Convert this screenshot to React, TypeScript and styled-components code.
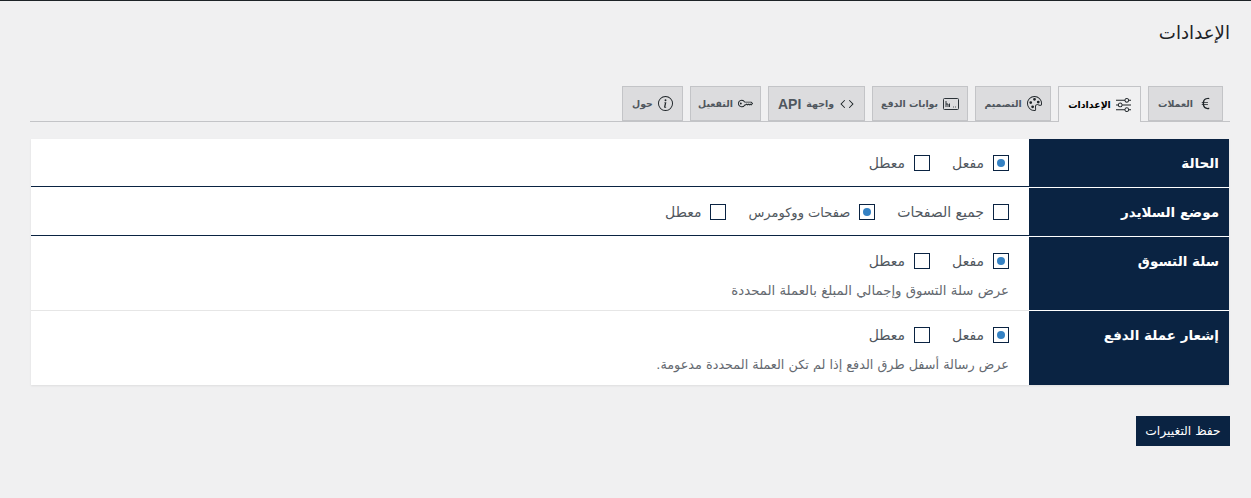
import React from 'react';
import styled, { createGlobalStyle } from 'styled-components';
import { BsCurrencyEuro, BsSliders, BsPalette, BsCode, BsKey, BsInfoCircle } from 'react-icons/bs';

const navy = '#0a2342';

const GlobalStyle = createGlobalStyle`
  html, body {
    margin: 0;
    padding: 0;
    background: #f0f0f1;
    font-family: "DejaVu Sans", "Noto Sans", sans-serif;
  }
`;

const Page = styled.div`
  direction: rtl;
  height: 497px;
  border-top: 1px solid #1d2327;
  padding: 0 21px 0 21px;
  overflow: hidden;
`;

const Title = styled.h1`
  margin: 0;
  padding: 19px 0 0;
  height: 85px;
  box-sizing: border-box;
  font-size: 18.2px;
  line-height: 26px;
  font-weight: 400;
  color: #1d2327;
`;

const TabBar = styled.div`
  display: flex;
  gap: 7px;
  height: 36px;
  box-sizing: border-box;
  margin-left: 9px;
  padding-right: 7px;
  border-bottom: 1px solid #c3c4c7;
`;

const Tab = styled.div<{ $active?: boolean; $width: number }>`
  display: flex;
  align-items: center;
  justify-content: center;
  gap: 5px;
  width: ${(p) => p.$width}px;
  height: ${(p) => (p.$active ? 36 : 35)}px;
  box-sizing: border-box;
  border: 1px solid #c3c4c7;
  border-bottom: ${(p) => (p.$active ? 'none' : '1px solid #c3c4c7')};
  background: ${(p) => (p.$active ? '#f0f0f1' : '#dcdcde')};
  color: ${(p) => (p.$active ? '#000' : '#50575e')};
  font-size: 9.4px;
  font-weight: 700;
  white-space: nowrap;

  svg {
    flex: none;
    color: #1d2327;
  }
`;

const ApiLatin = styled.span`
  font-family: "Liberation Sans", sans-serif;
  font-size: 14px;
`;

const Table = styled.div`
  margin-top: 17px;
  margin-left: 10px;
  margin-right: 1px;
  background: #fff;
  box-shadow: 0 1px 2px rgba(0, 0, 0, 0.08);
`;

const Row = styled.div<{ $height: number }>`
  display: grid;
  grid-template-columns: 200px 1fr;
  height: ${(p) => p.$height}px;
`;

const Head = styled.div<{ $gap?: boolean }>`
  background: ${navy};
  color: #fff;
  font-size: 13.5px;
  font-weight: 700;
  padding: 14px 10px 0 0;
  line-height: 20px;
  box-sizing: border-box;
  border-bottom: ${(p) => (p.$gap ? '1px solid #fff' : 'none')};
`;

const Body = styled.div<{ $line?: 'dark' | 'light' }>`
  padding: 15px 20px 0 0;
  box-sizing: border-box;
  margin-bottom: ${(p) => (p.$line === 'dark' ? '1px' : '0')};
  border-bottom: ${(p) =>
    p.$line === 'dark' ? `1px solid ${navy}` : p.$line === 'light' ? '1px solid #e6e6e6' : 'none'};
`;

const Options = styled.div`
  display: flex;
  gap: 22px;
  height: 18px;
  align-items: center;
`;

const Option = styled.label<{ $size?: number }>`
  display: flex;
  align-items: center;
  gap: 9px;
  font-size: ${(p) => p.$size ?? 14}px;
  color: #50575e;
`;

const Box = styled.span<{ $on?: boolean }>`
  display: inline-flex;
  align-items: center;
  justify-content: center;
  width: 16px;
  height: 16px;
  box-sizing: border-box;
  border: 1px solid ${navy};
  background: #fff;

  &::after {
    content: '';
    display: ${(p) => (p.$on ? 'block' : 'none')};
    width: 8px;
    height: 8px;
    border-radius: 50%;
    background: #3582c4;
  }
`;

const Hint = styled.p<{ $size: number }>`
  margin: 12px 0 0;
  font-size: ${(p) => p.$size}px;
  line-height: 18px;
  color: #646970;
`;

const Save = styled.button`
  display: block;
  margin: 31px 0 0;
  width: 94px;
  height: 30px;
  padding: 0;
  border: none;
  background: ${navy};
  color: #fff;
  font-family: inherit;
  font-size: 12.3px;
`;

const PaymentIcon = () => (
  <svg width="16" height="12" viewBox="0 0 16 12" fill="none" stroke="#2c3338">
    <rect x="0.5" y="0.5" width="15" height="11" rx="1" />
    <path d="M3 3v6M3 6h2v3M6.5 5.5v3.5M10 9h.8M12 9h.8" />
  </svg>
);

const App: React.FC = () => (
  <>
    <GlobalStyle />
    <Page>
      <Title>الإعدادات</Title>
      <TabBar>
        <Tab $width={75}><BsCurrencyEuro size={15} /> العملات</Tab>
        <Tab $width={83} $active><BsSliders size={15} /> الإعدادات</Tab>
        <Tab $width={76}><BsPalette size={15} /> التصميم</Tab>
        <Tab $width={96}><PaymentIcon /> بوابات الدفع</Tab>
        <Tab $width={97}><BsCode size={16} /> واجهة <ApiLatin>API</ApiLatin></Tab>
        <Tab $width={71}><BsKey size={15} /> التفعيل</Tab>
        <Tab $width={61}><BsInfoCircle size={15} /> حول</Tab>
      </TabBar>
      <Table>
        <Row $height={49}>
          <Head $gap>الحالة</Head>
          <Body $line="dark">
            <Options>
              <Option><Box $on />مفعل</Option>
              <Option><Box />معطل</Option>
            </Options>
          </Body>
        </Row>
        <Row $height={49}>
          <Head $gap>موضع السلايدر</Head>
          <Body $line="dark">
            <Options>
              <Option><Box />جميع الصفحات</Option>
              <Option $size={13}><Box $on />صفحات ووكومرس</Option>
              <Option><Box />معطل</Option>
            </Options>
          </Body>
        </Row>
        <Row $height={74}>
          <Head $gap>سلة التسوق</Head>
          <Body $line="light">
            <Options>
              <Option><Box $on />مفعل</Option>
              <Option><Box />معطل</Option>
            </Options>
            <Hint $size={13.3}>عرض سلة التسوق وإجمالي المبلغ بالعملة المحددة</Hint>
          </Body>
        </Row>
        <Row $height={74}>
          <Head>إشعار عملة الدفع</Head>
          <Body>
            <Options>
              <Option><Box $on />مفعل</Option>
              <Option><Box />معطل</Option>
            </Options>
            <Hint $size={12.8}>عرض رسالة أسفل طرق الدفع إذا لم تكن العملة المحددة مدعومة.</Hint>
          </Body>
        </Row>
      </Table>
      <Save>حفظ التغييرات</Save>
    </Page>
  </>
);

export default App;
